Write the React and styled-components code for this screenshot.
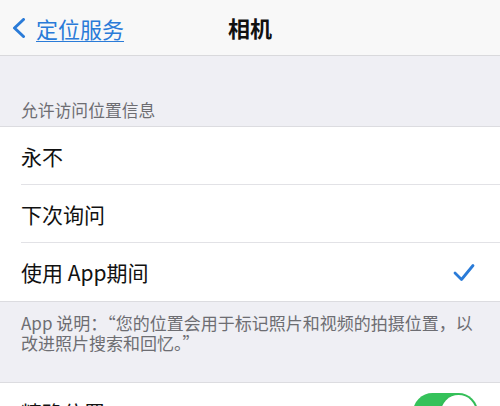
import React from "react";
import styled, { createGlobalStyle } from "styled-components";

const Global = createGlobalStyle`
  html, body { margin: 0; padding: 0; background: #efeff4; }
  body {
    font-family: "Noto Sans CJK SC", "Noto Sans", "Liberation Sans", sans-serif;
    -webkit-font-smoothing: antialiased;
  }
`;

const Page = styled.div`
  width: 500px;
  height: 406px;
  overflow: hidden;
  background: #efeff4;
`;

const NavBar = styled.header`
  height: 55px;
  display: grid;
  grid-template-columns: 1fr auto 1fr;
  align-items: center;
  background: #f8f8f8;
  border-bottom: 1px solid #d9d9dc;
`;

const BackButton = styled.a`
  display: flex;
  align-items: center;
  gap: 10px;
  padding-left: 12px;
  color: #2a7bd8;
  font-size: 22px;
  line-height: 26px;
  text-decoration: underline;
  text-underline-offset: 3px;
  text-decoration-thickness: 1px;
  svg { flex: none; }
  span { margin-top: 1px; }
`;

const Title = styled.h1`
  margin: 0;
  font-size: 22px;
  font-weight: 700;
  color: #111;
  line-height: 26px;
  margin-top: -1px;
`;

const SectionHeader = styled.div`
  padding: 44px 21px 6px;
  font-size: 16.8px;
  line-height: 20px;
  color: #6d6d72;
`;

const Group = styled.div`
  background: #fff;
  border-top: 1px solid #dcdce0;
  border-bottom: 1px solid #dcdce0;
`;

const Row = styled.div`
  height: 58px;
  margin-left: 21px;
  padding-right: 22px;
  display: flex;
  align-items: center;
  justify-content: space-between;
  border-bottom: ${(p) => (p.$last ? "none" : "1px solid #e2e2e6")};
  box-sizing: border-box;
  font-size: 21px;
  color: #111;
`;

const CheckIcon = styled.svg`
  width: 22px;
  height: 19px;
  margin-right: 3px;
`;

const Footer = styled.div`
  padding: 11px 21px 29px;
  font-size: 17px;
  line-height: 20px;
  color: #6d6d72;
`;

const Toggle = styled.div`
  width: 65px;
  height: 39px;
  border-radius: 20px;
  background: #35c25a;
  position: relative;
  flex: none;
  &::after {
    content: "";
    position: absolute;
    top: 2px;
    right: 2px;
    width: 35px;
    height: 35px;
    border-radius: 50%;
    background: #fff;
    box-shadow: 0 2px 4px rgba(0, 0, 0, 0.2);
  }
`;

export default function App() {
  return (
    <Page>
      <Global />
      <NavBar>
        <BackButton>
          <svg width="14" height="20" viewBox="0 0 14 20">
            <path d="M11.5 1.5 L2.5 10 L11.5 18.5" fill="none" stroke="#2a7bd8" strokeWidth="3" strokeLinecap="round" strokeLinejoin="round" />
          </svg>
          <span>定位服务</span>
        </BackButton>
        <Title>相机</Title>
        <div />
      </NavBar>
      <SectionHeader>允许访问位置信息</SectionHeader>
      <Group>
        <Row>永不</Row>
        <Row>下次询问</Row>
        <Row $last>
          <span>使用 App期间</span>
          <CheckIcon viewBox="0 0 22 19">
            <path d="M2 10 L8.5 16.5 L20 2.5" fill="none" stroke="#2a7bd8" strokeWidth="2.8" strokeLinecap="round" strokeLinejoin="round" />
          </CheckIcon>
        </Row>
      </Group>
      <Footer>App 说明：“您的位置会用于标记照片和视频的拍摄位置，以改进照片搜索和回忆。”</Footer>
      <Group>
        <Row $last>
          <span>精确位置</span>
          <Toggle />
        </Row>
      </Group>
    </Page>
  );
}
